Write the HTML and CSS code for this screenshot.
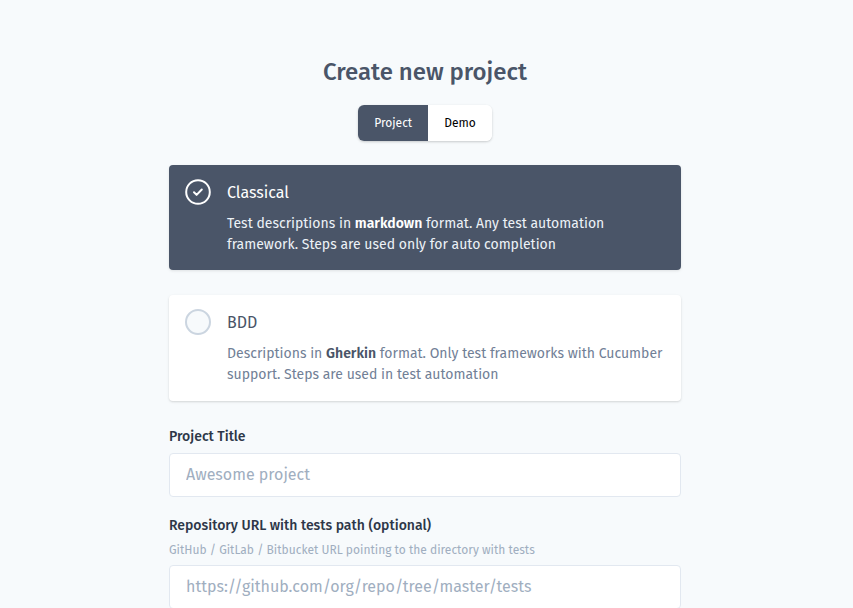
FILE: index.html
```html
<!DOCTYPE html>
<html lang="en">
<head>
<meta charset="utf-8">
<title>Create new project</title>
<link rel="stylesheet" href="styles.css">
</head>
<body>
<main class="page">
  <h1 class="title">Create new project</h1>
  <div class="toggle">
    <button class="toggle-btn active">Project</button>
    <button class="toggle-btn">Demo</button>
  </div>

  <div class="card selected">
    <svg class="check" width="26" height="26" viewBox="0 0 26 26" fill="none">
      <circle cx="13" cy="13" r="11.8" stroke="#fff" stroke-width="2"/>
      <path d="M9 13.3l2.6 2.6 5.2-5.4" stroke="#fff" stroke-width="2" stroke-linecap="round" stroke-linejoin="round"/>
    </svg>
    <div class="card-body">
      <div class="card-title">Classical</div>
      <p class="card-desc">Test descriptions in <b>markdown</b> format. Any test automation framework. Steps are used only for auto completion</p>
    </div>
  </div>

  <div class="card bdd">
    <span class="radio"></span>
    <div class="card-body">
      <div class="card-title">BDD</div>
      <p class="card-desc">Descriptions in <b>Gherkin</b> format. Only test frameworks with Cucumber support. Steps are used in test automation</p>
    </div>
  </div>

  <label class="label first">Project Title</label>
  <input class="input" type="text" placeholder="Awesome project">

  <label class="label second">Repository URL with tests path (optional)</label>
  <div class="hint">GitHub / GitLab / Bitbucket URL pointing to the directory with tests</div>
  <input class="input" type="text" placeholder="https://github.com/org/repo/tree/master/tests">
</main>
</body>
</html>
```
FILE: styles.css
```css
* { box-sizing: border-box; }
html, body { margin: 0; }
body {
  background: #f7fafc;
  font-family: "Fira Sans", "Open Sans", "Noto Sans", sans-serif;
  color: #4a5568;
  padding-right: 3px;
  overflow: hidden;
}
.page {
  width: 512px;
  margin: 0 auto;
  padding-top: 56px;
  display: flex;
  flex-direction: column;
}
.title {
  margin: 0;
  text-align: center;
  font-size: 24px;
  line-height: 32px;
  font-weight: 500;
  color: #4a5568;
}
.toggle {
  align-self: center;
  margin-top: 17px;
  display: flex;
  border-radius: 6px;
  background: #fff;
  box-shadow: 0 1px 3px rgba(0,0,0,0.12), 0 1px 2px rgba(0,0,0,0.08);
  overflow: hidden;
}
.toggle-btn {
  border: 0;
  height: 36px;
  padding: 0 16px;
  font-family: inherit;
  font-size: 12px;
  font-weight: 400;
  background: #fff;
  color: #000;
}
.toggle-btn.active {
  background: #4a5568;
  color: #fff;
  width: 70px;
}
.card {
  margin-top: 24px;
  display: flex;
  gap: 16px;
  padding: 16px 16px 15px;
  background: #fff;
  border-radius: 4px;
  box-shadow: 0 1px 3px rgba(0,0,0,0.1), 0 1px 2px rgba(0,0,0,0.06);
}
.card.bdd { margin-top: 25px; padding-bottom: 16px; }
.card.selected {
  background: #4a5568;
  box-shadow: 0 1px 3px rgba(0,0,0,0.1);
}
.check { flex: none; margin-top: -2px; }
.radio {
  flex: none;
  width: 26px;
  height: 26px;
  margin-top: -2px;
  border-radius: 50%;
  border: 2px solid #cbd5e0;
  background: #f7fafc;
}
.card-title {
  font-size: 16px;
  line-height: 24px;
  color: #4a5568;
}
.card-desc {
  margin: 8px 0 0;
  font-size: 14px;
  line-height: 21px;
  color: #718096;
}
.card-desc b { font-weight: 600; color: #4a5568; }
.selected .card-title { color: #fff; }
.selected .card-desc { color: #edf2f7; }
.selected .card-desc b { color: #fff; }
.label {
  font-size: 14px;
  line-height: 20px;
  font-weight: 500;
  color: #2d3748;
}
.label.first { margin-top: 26px; margin-bottom: 6px; }
.label.second { margin-top: 19px; }
.hint {
  margin-top: 6px;
  margin-bottom: 7px;
  font-size: 12px;
  line-height: 16px;
  color: #a0aec0;
}
.input {
  width: 100%;
  height: 44px;
  padding: 0 16px 1px;
  border: 1px solid #e2e8f0;
  border-radius: 4px;
  background: #fff;
  font-family: inherit;
  font-size: 16px;
  color: #2d3748;
  outline: none;
}
.input::placeholder { color: #a0aec0; }
```
